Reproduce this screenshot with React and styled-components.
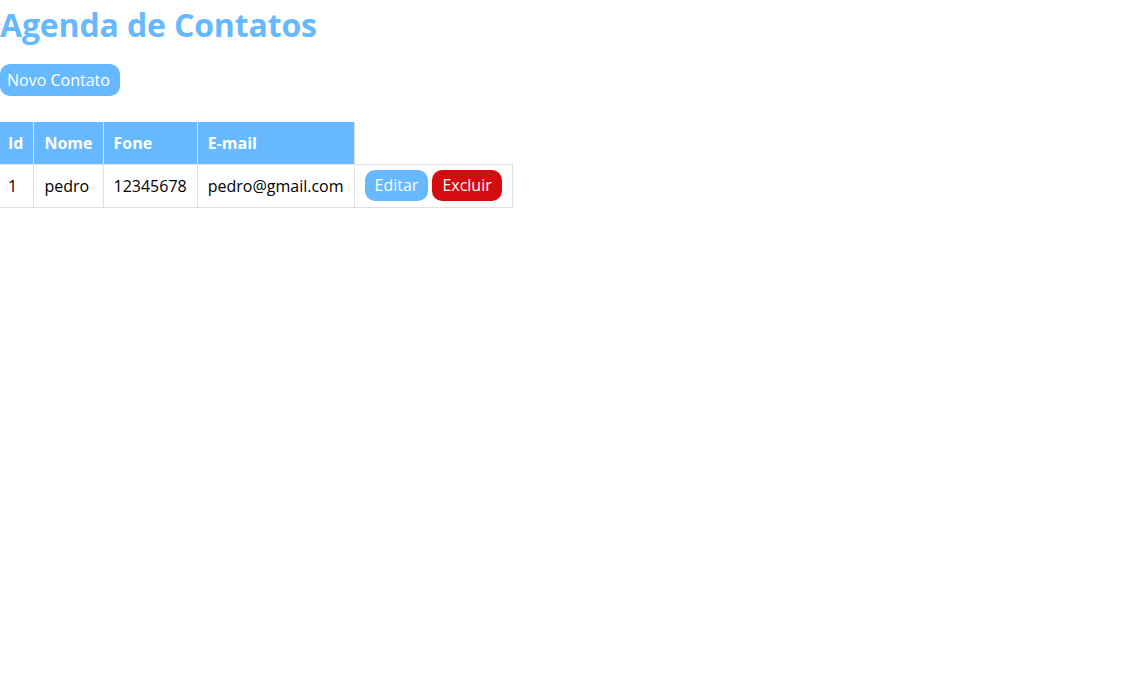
import React from "react";
import styled, { createGlobalStyle } from "styled-components";

const GlobalStyle = createGlobalStyle`
  body {
    margin: 0;
    background: #ffffff;
    font-family: "Open Sans", "Noto Sans", sans-serif;
    color: #000000;
  }
`;

const Page = styled.div`
  display: flex;
  flex-direction: column;
  align-items: flex-start;
`;

const Title = styled.h1`
  margin: 3px 0 18px;
  font-size: 32px;
  font-weight: 700;
  letter-spacing: -0.15px;
  color: #66b9ff;
`;

const Button = styled.button`
  font-family: "Open Sans", "Noto Sans", sans-serif;
  font-size: 16px;
  line-height: 22px;
  color: #ffffff;
  background: ${(p) => (p.$danger ? "#d40c10" : "#66b9ff")};
  border: none;
  border-radius: 10px;
  padding: ${(p) => (p.$small ? "4px 10px 5px" : "5px 10px 5px 7px")};
  cursor: pointer;
`;

const Table = styled.table`
  margin-top: 26px;
  border-collapse: collapse;
  font-size: 16px;
  line-height: 22px;
`;

const HeadCell = styled.th`
  background: ${(p) => (p.$empty ? "transparent" : "#66b9ff")};
  color: #ffffff;
  font-weight: 700;
  text-align: left;
  padding: 10px;
  border: ${(p) => (p.$empty ? "none" : "1px solid #e0e0e0")};
  border-top: none;
  &:first-child {
    border-left: none;
    padding-left: 8px;
  }
`;

const Cell = styled.td`
  padding: 5px 10px 6px;
  border: 1px solid #e0e0e0;
  vertical-align: middle;
  &:first-child {
    border-left: none;
    padding-left: 8px;
  }
`;

const Actions = styled.div`
  display: flex;
  gap: 4px;
`;

const contatos = [
  { id: 1, nome: "pedro", fone: "12345678", email: "pedro@gmail.com" },
];

export default function App() {
  return (
    <Page>
      <GlobalStyle />
      <Title>Agenda de Contatos</Title>
      <Button>Novo Contato</Button>
      <Table>
        <thead>
          <tr>
            <HeadCell>Id</HeadCell>
            <HeadCell>Nome</HeadCell>
            <HeadCell>Fone</HeadCell>
            <HeadCell>E-mail</HeadCell>
            <HeadCell $empty />
          </tr>
        </thead>
        <tbody>
          {contatos.map((c) => (
            <tr key={c.id}>
              <Cell>{c.id}</Cell>
              <Cell>{c.nome}</Cell>
              <Cell>{c.fone}</Cell>
              <Cell>{c.email}</Cell>
              <Cell>
                <Actions>
                  <Button $small>Editar</Button>
                  <Button $small $danger>
                    Excluir
                  </Button>
                </Actions>
              </Cell>
            </tr>
          ))}
        </tbody>
      </Table>
    </Page>
  );
}
